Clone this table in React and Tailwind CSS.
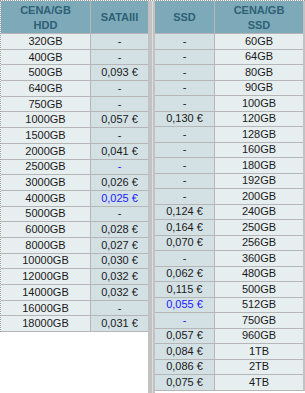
import React from "react";

const left = [
  ["320GB", "-"], ["400GB", "-"], ["500GB", "0,093 €"], ["640GB", "-"], ["750GB", "-"],
  ["1000GB", "0,057 €"], ["1500GB", "-"], ["2000GB", "0,041 €"], ["2500GB", "-", true],
  ["3000GB", "0,026 €"], ["4000GB", "0,025 €", true], ["5000GB", "-"], ["6000GB", "0,028 €"],
  ["8000GB", "0,027 €"], ["10000GB", "0,030 €"], ["12000GB", "0,032 €"], ["14000GB", "0,032 €"],
  ["16000GB", "-"], ["18000GB", "0,031 €"],
];

const right = [
  ["-", "60GB"], ["-", "64GB"], ["-", "80GB"], ["-", "90GB"], ["-", "100GB"],
  ["0,130 €", "120GB"], ["-", "128GB"], ["-", "160GB"], ["-", "180GB"], ["-", "192GB"],
  ["-", "200GB"], ["0,124 €", "240GB"], ["0,164 €", "250GB"], ["0,070 €", "256GB"],
  ["-", "360GB"], ["0,062 €", "480GB"], ["0,115 €", "500GB"], ["0,055 €", "512GB", true],
  ["-", "750GB", true], ["0,057 €", "960GB"], ["0,084 €", "1TB"], ["0,086 €", "2TB"], ["0,075 €", "4TB"],
];

const font = { fontFamily: '"Liberation Sans", Arial, sans-serif' };

export default function App() {
  return (
    <div
      className="w-[305px] h-[393px] bg-white border-t border-dotted border-[#9a9a9a] overflow-hidden flex items-start"
      style={font}
    >
      {/* Left table */}
      <div className="w-[148px] flex flex-col border-l border-dotted border-[#9a9a9a]">
        <div className="flex h-[33px] bg-[#7ea9b8] border-b border-[#b6b6b6] text-[11px] font-bold text-[#2d6176]">
          <div className="w-[90px] border-r border-[#b6b6b6] flex flex-col items-center justify-center leading-[15px] pt-[1px]">
            <span>CENA/GB</span>
            <span>HDD</span>
          </div>
          <div className="flex-1 flex items-center justify-center pt-[1px]">SATAIII</div>
        </div>
        {left.map(([a, b, blue]) => (
          <div key={a} className="flex h-[15.7px] border-b border-[#b6b6b6] text-[11px] leading-none text-[#1a1a1a]">
            <div className="w-[90px] bg-[#e7eef0] border-r border-[#b6b6b6] flex items-center justify-center">{a}</div>
            <div className={`flex-1 bg-[#d3e0e4] flex items-center justify-center ${blue ? "text-[#1a1aff]" : ""}`}>{b}</div>
          </div>
        ))}
      </div>
      {/* Divider */}
      <div className="w-[7px] h-full flex">
        <div className="w-[4px] bg-[#c2c2c2]" />
        <div className="w-[1px] bg-[#dcdcdc]" />
        <div className="w-[2px] bg-[#c2c2c2]" />
      </div>
      {/* Right table */}
      <div className="w-[150px] flex flex-col border-r-2 border-[#c2c2c2]">
        <div className="flex h-[33px] bg-[#7ea9b8] border-b border-[#b6b6b6] text-[11px] font-bold text-[#2d6176]">
          <div className="w-[60px] border-r border-[#b6b6b6] flex items-center justify-center pt-[1px]">SSD</div>
          <div className="flex-1 flex flex-col items-center justify-center leading-[15px] pt-[1px]">
            <span>CENA/GB</span>
            <span>SSD</span>
          </div>
        </div>
        {right.map(([a, b, blue]) => (
          <div key={b} className="flex h-[15.5px] border-b border-[#b6b6b6] text-[11px] leading-none text-[#1a1a1a]">
            <div className={`w-[60px] bg-[#d3e0e4] border-r border-[#b6b6b6] flex items-center justify-center ${blue ? "text-[#1a1aff]" : ""}`}>{a}</div>
            <div className="flex-1 bg-[#e7eef0] flex items-center justify-center">{b}</div>
          </div>
        ))}
      </div>
    </div>
  );
}
